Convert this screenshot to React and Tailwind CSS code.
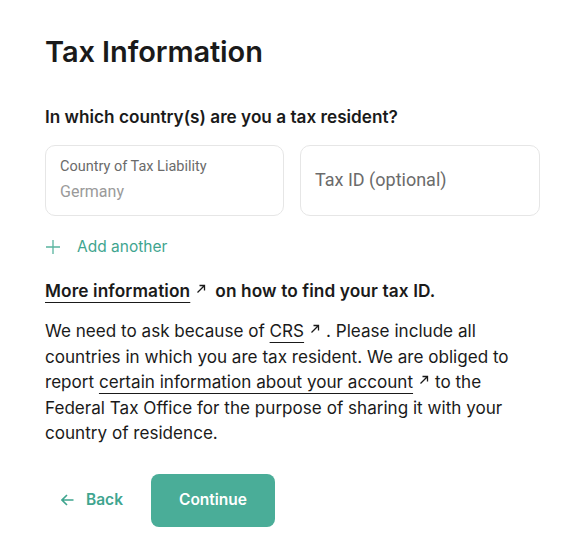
import React from "react";

function Ext({ after = 6 }) {
  return (
    <svg width="10" height="10" viewBox="0 0 10 10" className="inline-block ml-[6px] align-[3px]" style={{ marginRight: after }} fill="none" stroke="currentColor" strokeWidth="1.3">
      <path d="M1.5 8.5 L8.5 1.5 M3.5 1.5 H8.5 V6.5" />
    </svg>
  );
}

export default function App() {
  return (
    <div className="w-[561px] h-[551px] bg-white text-[#1a1a1a] pl-[45px] pr-[21px] pt-[34px]" style={{ fontFamily: "Inter, 'Noto Sans', sans-serif" }}>
      <h1 className="text-[29px] font-semibold leading-[36px] tracking-[-0.1px]">Tax Information</h1>
      <h2 className="mt-[35px] text-[17.2px] font-semibold leading-[24px]">In which country(s) are you a tax resident?</h2>
      <div className="mt-[16px] flex gap-[16px]" style={{ fontFamily: "Roboto, sans-serif" }}>
        <div className="w-[239px] shrink-0 h-[71px] rounded-[10px] border border-[#e6e6e6] px-[14px] pt-[11px]">
          <div className="text-[14.5px] text-[#6b6b6b] leading-[20px]">Country of Tax Liability</div>
          <div className="text-[16px] text-[#9a9a9a] leading-[20px] mt-[5px]">Germany</div>
        </div>
        <div className="w-[240px] shrink-0 h-[71px] rounded-[10px] border border-[#e6e6e6] px-[14px] flex items-center">
          <div className="text-[18px] text-[#6b6b6b] -mt-[2px]">Tax ID (optional)</div>
        </div>
      </div>
      <div className="mt-[20px] flex items-center text-[#3fa58f] text-[15.5px] leading-[22px]">
        <svg width="14" height="14" viewBox="0 0 14 14" className="ml-[1px] mr-[17px]" stroke="#58b49f" strokeWidth="1.3"><path d="M7 0 V14 M0 7 H14" /></svg>
        <span>Add another</span>
      </div>
      <p className="mt-[21px] text-[17.3px] font-semibold leading-[24px] tracking-[0.1px]">
        <span className="underline underline-offset-[5px] decoration-1">More information</span><Ext after={9} />on how to find your tax ID.
      </p>
      <p className="mt-[15px] text-[17.1px] leading-[25.5px] text-[#1a1a1a]">
        We need to ask because of <span className="underline underline-offset-[5px] decoration-1">CRS</span><Ext />. Please include all countries in which you are tax resident. We are obliged to report <span className="underline underline-offset-[5px] decoration-1">certain information about your account</span><Ext />to the Federal Tax Office for the purpose of sharing it with your country of residence.
      </p>
      <div className="mt-[28px] flex items-center">
        <button className="w-[106px] h-[53px] flex items-center justify-start pl-[16px] gap-[12px] text-[#3fa58f] font-semibold text-[15.5px]">
          <svg width="13" height="12" viewBox="0 0 13 12" fill="none" stroke="#3fa58f" strokeWidth="1.6"><path d="M12.5 6 H1.5 M6 1 L1 6 L6 11" /></svg>
          Back
        </button>
        <button className="w-[124px] h-[53px] rounded-[8px] bg-[#4aad98] text-white font-semibold text-[15.5px]">Continue</button>
      </div>
    </div>
  );
}
